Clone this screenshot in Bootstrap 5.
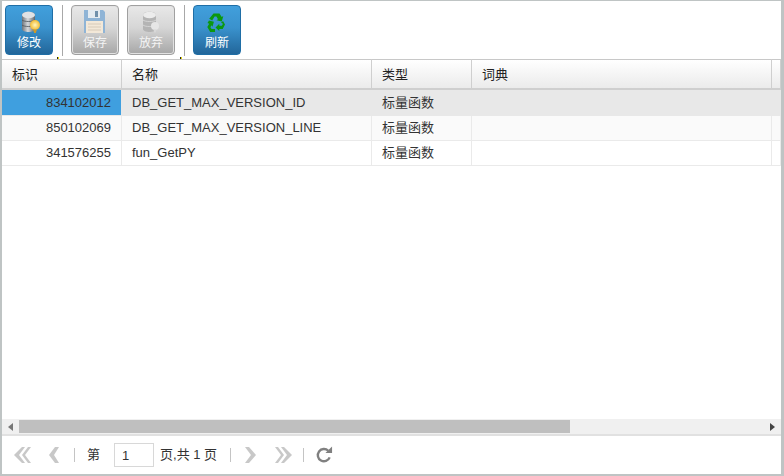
<!DOCTYPE html>
<html lang="zh"><head><meta charset="utf-8"><title>函数</title>
<link rel="stylesheet" href="https://cdn.jsdelivr.net/npm/bootstrap@5.3.0/dist/css/bootstrap.min.css">
<style>
html,body{height:100%;margin:0;overflow:hidden;background:#fff}
body{font-family:"Liberation Sans","Noto Sans CJK SC",sans-serif;font-size:13px;color:#333}
.shell{width:784px;height:476px;border:solid #bfc4c4;border-width:1px 3px 2px 2px}
.tools{height:58px;padding:4px 0 0 3px;gap:8px;position:relative}
.tdot{position:absolute;top:56px;width:2px;height:2px;background:linear-gradient(90deg,#222 50%,#e6d800 50%)}
.tdot.d1{left:55px}.tdot.d2{left:178px}
.tbtn{width:48px;height:50px;border:1px solid #1f6ea6;border-radius:4px;background:linear-gradient(#419fdc,#3a92cd 45%,#22669a);color:#fff;font-size:12px;line-height:14px;padding:4px 0 0;display:flex;flex-direction:column;align-items:center;gap:0}
.tbtn.off{border-color:#a0a0a0;background:linear-gradient(#e8e8e8,#d6d6d6 45%,#a7a7a7);color:#f4f4f4;box-shadow:inset 0 0 0 1px #e2e2e2}
.tbtn svg{display:block}
.vsep{width:1px;height:51px;background:#a8a8a8;margin:0 0 0 1px}
.gridwrap{min-height:0;overflow:hidden}
.dtable{table-layout:fixed;width:779px;margin:0;border-collapse:separate;border-spacing:0;color:#333;--bs-table-bg:transparent}
.dtable>thead>tr>th{height:31px;padding:1px 10px 0;font-size:13px;font-weight:400;color:#222;background:linear-gradient(#fff,#ebebeb);border-top:1px solid #c8c8c8;border-bottom:2px solid #cfcfcf;border-right:1px solid #cfcfcf;vertical-align:middle;box-shadow:none}
.dtable>tbody>tr>td{height:25px;padding:0 10px;font-size:13px;line-height:1.2;border-bottom:1px solid #eaeaea;border-right:1px solid #eaeaea;vertical-align:middle;white-space:nowrap;box-shadow:none}
.dtable>tbody>tr.rowsel>td{height:26px;background:#e8e8e8;border-color:#e8e8e8}
.dtable>tbody>tr.rowalt>td{background:#fafafa}
.dtable>tbody>tr>td.idcell{text-align:right}
.dtable>tbody>tr.rowsel>td.idcell{background:#3f9fdf}
.hscroll{height:17px;background:#f0f0f0;border-bottom:2px solid #e1e1e1}
.hscroll .thumb{width:551px;height:13px;background:#bfbfbf;margin-top:1px}
.arrowl,.arrowr{width:17px;height:100%;display:flex;align-items:center;justify-content:center;flex:none}
.pager{height:38px;padding-left:12px;font-size:13px;color:#333}
.pg-sep{width:1px;height:14px;background:#c4c4c4;flex:none}
.pginput{width:40px;height:24px;border:1px solid #d8d8d8;padding:0 7px;font-size:13px;color:#333;font-family:inherit;outline:0;background:#fff;box-shadow:none;border-radius:0;margin:0 6px 0 14px}
.g18{margin-left:18px}.g19{margin-left:19px}.g13{margin-left:13px}.g14{margin-left:14px}.g15{margin-left:15px}.g12{margin-left:12px}.g11{margin-left:11px}
.pager svg{flex:none}
</style></head><body>
<div class="shell d-flex flex-column">
  <div class="tools d-flex align-items-start flex-none">
    <button class="tbtn" type="button">
      <svg width="26" height="26" viewBox="0 0 26 26"><defs><linearGradient id="c1" x1="0" x2="1"><stop offset="0" stop-color="#6f757b"/><stop offset=".45" stop-color="#d6d9dc"/><stop offset="1" stop-color="#5f656b"/></linearGradient><radialGradient id="b1"><stop offset="0" stop-color="#fff7c0"/><stop offset="1" stop-color="#f1bb33"/></radialGradient></defs><path d="M6 5c0-4.500 13-4.500 13 0v14c0 4-13 4-13 0z" fill="url(#c1)"/><ellipse cx="12.500" cy="5" rx="6.500" ry="3.200" fill="#dfe2e5"/><path d="M6 10c2 2 11 2 13 0M6 15c2 2 11 2 13 0" stroke="#4f555b" stroke-width=".8" fill="none"/><circle cx="19" cy="15" r="5" fill="url(#b1)"/><path d="M17 19.500h4l-1.200 3.500h-1.600z" fill="#cf9a28"/></svg>
      <span>修改</span></button>
    <div class="vsep"></div>
    <button class="tbtn off" type="button" disabled>
      <svg width="26" height="26" viewBox="0 0 26 26"><path d="M2 0h19l2 2v21H2z" fill="#8fb4d6"/><rect x="6" y="0" width="12" height="8" fill="#e4ebf1"/><rect x="13" y="1" width="3" height="6" fill="#7090ab"/><rect x="4" y="11" width="17" height="12" fill="#f3e8d8"/><path d="M6 14h13M6 17h13M6 20h13" stroke="#cfc3b2" stroke-width=".8"/></svg>
      <span>保存</span></button>
    <button class="tbtn off" type="button" disabled>
      <svg width="26" height="26" viewBox="0 0 26 26"><path d="M5 5c0-4.500 13-4.500 13 0v14c0 4-13 4-13 0z" fill="#b4b4b4"/><ellipse cx="11.500" cy="5" rx="6.500" ry="3.200" fill="#ececec"/><path d="M5 10c2 2 11 2 13 0M5 15c2 2 11 2 13 0" stroke="#dcdcdc" stroke-width=".8" fill="none"/><circle cx="17" cy="16" r="4" fill="#e6e6e6"/><path d="M15.500 19.500h3l-.8 3h-1.400z" fill="#d8d8d8"/></svg>
      <span>放弃</span></button>
    <div class="vsep"></div>
    <button class="tbtn" type="button">
      <svg width="26" height="26" viewBox="0 0 26 26"><g fill="#0b980f"><path d="M9.500 3.500h6l2.200 3.600 1.600-1-1.500 5.400-5.300-1.300 1.500-.9-1.600-2.700h-1.800l-2.400 3.900-3-1.800z"/><path d="M19 11l2 3.500-2.300 4.500h-3.400v2l-3.800-3.600 3.800-3.600v2h2.600l1.100-2.100-2-.9z"/><path d="M5 10.500l4.900 1.300-1.400 5 -1-1.500-1.100 1.900 1.200 1.800H11v3H6.200L3.300 17.100l1.900-3.300-1.700-.9z"/></g></svg>
      <span>刷新</span></button>
    <i class="tdot d1"></i><i class="tdot d2"></i>
  </div>
  <div class="gridwrap flex-grow-1">
    <table class="table dtable">
      <colgroup><col style="width:120px"><col style="width:250px"><col style="width:100px"><col style="width:300px"><col style="width:9px"></colgroup>
      <thead><tr><th>标识</th><th>名称</th><th>类型</th><th>词典</th><th></th></tr></thead>
      <tbody>
        <tr class="rowsel"><td class="idcell">834102012</td><td>DB_GET_MAX_VERSION_ID</td><td>标量函数</td><td></td><td></td></tr>
        <tr class="rowalt"><td class="idcell">850102069</td><td>DB_GET_MAX_VERSION_LINE</td><td>标量函数</td><td></td><td></td></tr>
        <tr><td class="idcell">341576255</td><td>fun_GetPY</td><td>标量函数</td><td></td><td></td></tr>
      </tbody>
    </table>
  </div>
  <div class="hscroll d-flex align-items-start flex-none">
    <div class="arrowl"><svg width="5" height="8" viewBox="0 0 5 8"><path d="M5 0v8L0 4z" fill="#777"/></svg></div>
    <div class="thumb"></div>
    <div class="flex-grow-1"></div>
    <div class="arrowr"><svg width="5" height="8" viewBox="0 0 5 8"><path d="M0 0v8l5-4z" fill="#444"/></svg></div>
  </div>
  <div class="pager d-flex align-items-center flex-none">
    <svg width="17" height="16" viewBox="0 0 17 16"><path d="M8 0h3L5 8l6 8H8L0 8zM14 0h3l-6 8 6 8h-3L8 8z" fill="#c8c8c8"/></svg>
    <svg class="g18" width="10" height="16" viewBox="0 0 10 16"><path d="M6 0h4L5 8l5 8H6L0 8z" fill="#c8c8c8"/></svg>
    <span class="pg-sep g15"></span>
    <span class="g12">第</span>
    <input class="pginput" value="1" aria-label="页码">
    <span class="text-nowrap">页,共 1 页</span>
    <span class="pg-sep g13"></span>
    <svg class="g14" width="11" height="16" viewBox="0 0 11 16"><path d="M4 0H0l6 8-6 8h4l7-8z" fill="#c8c8c8"/></svg>
    <svg class="g19" width="17" height="16" viewBox="0 0 17 16"><path d="M3 0H0l6 8-6 8h3l6-8zM9 0H6l6 8-6 8h3l8-8z" fill="#c8c8c8"/></svg>
    <span class="pg-sep g11"></span>
    <svg class="g12" width="17" height="18" viewBox="0 0 18 18"><path d="M14.500 11.500A6.500 6.500 0 1 1 13 4.500" fill="none" stroke="#808080" stroke-width="2.500"/><path d="M10 7h7V0z" fill="#808080"/></svg>
  </div>
</div>
</body></html>
